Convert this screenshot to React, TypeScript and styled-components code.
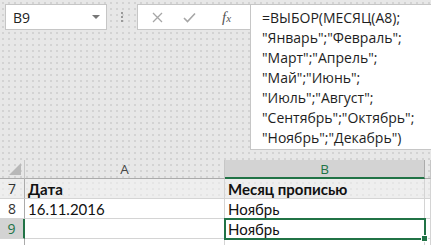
import styled, { createGlobalStyle } from 'styled-components'

const GlobalStyle = createGlobalStyle`
    html, body {
        margin: 0;
        padding: 0;
        width: 431px;
        height: 245px;
        overflow: hidden;
        background-color: #e7e7e7;
        background-image: radial-gradient(#d2d2d2 0.7px, transparent 0.8px);
        background-size: 6px 6px;
    }
`

const Page = styled.div`
    width: 431px;
    height: 245px;
    overflow: hidden;
    display: flex;
    flex-direction: column;
`

// Formula bar
const Bar = styled.div`
    height: 160px;
    flex-shrink: 0;
    display: flex;
    align-items: flex-start;
    padding: 4px 0 0 5px;
    box-sizing: border-box;
`

const NameBox = styled.div`
    width: 102px;
    height: 26px;
    box-sizing: border-box;
    background: #fff;
    border: 1px solid #c6c6c6;
    display: flex;
    align-items: center;
    justify-content: space-between;
    padding: 0 6px 0 7px;
    font-family: "Open Sans", sans-serif;
    font-size: 14px;
    color: #222;
`

const Caret = styled.span`
    width: 0;
    height: 0;
    border-left: 4px solid transparent;
    border-right: 4px solid transparent;
    border-top: 4px solid #777;
`

const Grip = styled.div`
    width: 30px;
    height: 26px;
    display: flex;
    flex-direction: column;
    align-items: center;
    justify-content: center;
    gap: 2px;

    & > span {
        width: 2px;
        height: 2px;
        background: #9a9a9a;
    }
`

const Buttons = styled.div`
    width: 113px;
    height: 26px;
    box-sizing: border-box;
    background: #fff;
    border: 1px solid #c6c6c6;
    border-right: 0;
    display: flex;
    align-items: center;
    padding-left: 14px;
    gap: 20px;
`

const Fx = styled.span`
    font-family: "Liberation Serif", serif;
    font-style: italic;
    font-size: 15px;
    color: #555;
    margin-left: 6px;

    & > small {
        font-size: 11px;
    }
`

const FormulaBox = styled.div`
    flex: 1;
    height: 146px;
    box-sizing: border-box;
    background: #fff;
    border: 1px solid #c6c6c6;
    border-right: 0;
    padding: 3px 0 0 11px;
    font-family: "Open Sans", sans-serif;
    font-size: 14px;
    line-height: 20px;
    color: #1e1e1e;
    white-space: pre;
`

// Sheet
const Grid = styled.div`
    display: grid;
    grid-template-columns: 25px 200px 200px 1fr;
    grid-template-rows: 19px 20px 20px 20px 20px;
    font-family: Lato, "Liberation Sans", sans-serif;
    font-size: 15px;
    color: #111;
`

const Corner = styled.div`
    position: relative;
    border-right: 1px solid #c6c6c6;
    border-bottom: 1px solid #ababab;

    &::after {
        content: "";
        position: absolute;
        right: 3px;
        bottom: 3px;
        width: 0;
        height: 0;
        border-left: 12px solid transparent;
        border-bottom: 12px solid #b8b8b8;
    }
`

const ColHead = styled.div<{ $active?: boolean }>`
    display: flex;
    align-items: center;
    justify-content: center;
    font-family: "Open Sans", sans-serif;
    font-size: 13.5px;
    color: ${p => (p.$active ? '#217346' : '#444')};
    background: ${p => (p.$active ? '#d3d3d3' : 'transparent')};
    border-right: 1px solid ${p => (p.$active ? '#ababab' : '#c6c6c6')};
    border-bottom: ${p => (p.$active ? '2px solid #217346' : '1px solid #ababab')};
    box-sizing: border-box;
`

const RowHead = styled.div<{ $active?: boolean; $shade?: boolean }>`
    display: flex;
    align-items: center;
    justify-content: center;
    font-family: "Open Sans", sans-serif;
    font-size: 14px;
    color: ${p => (p.$active ? '#217346' : '#333')};
    background: ${p => (p.$active ? '#d3d3d3' : p.$shade ? 'rgba(244,244,244,0.55)' : '#fff')};
    border-right: ${p => (p.$active ? '2px solid #217346' : '1px solid #ababab')};
    border-bottom: 1px solid #d4d4d4;
    box-sizing: border-box;
`

const Cell = styled.div<{ $bold?: boolean; $shade?: boolean; $selected?: boolean }>`
    position: relative;
    display: flex;
    align-items: center;
    padding-left: 3px;
    font-weight: ${p => (p.$bold ? 700 : 400)};
    background: ${p => (p.$shade ? 'rgba(244,244,244,0.55)' : '#fff')};
    border-right: 1px solid #d4d4d4;
    border-bottom: 1px solid #d4d4d4;
    box-sizing: border-box;

    ${p => p.$selected && `
        outline: 2px solid #217346;
        outline-offset: -1px;
        z-index: 1;
        &::after {
            content: "";
            position: absolute;
            right: -4px;
            bottom: -4px;
            width: 5px;
            height: 5px;
            background: #217346;
            border: 1px solid #fff;
        }
    `}
`

const CrossIcon = () => (
    <svg width="11" height="11" viewBox="0 0 11 11">
        <path d="M1 1 L10 10 M10 1 L1 10" stroke="#a6a6a6" strokeWidth="1.3" fill="none" />
    </svg>
)

const CheckIcon = () => (
    <svg width="13" height="11" viewBox="0 0 13 11">
        <path d="M1 6 L4.5 9.5 L12 1.5" stroke="#a6a6a6" strokeWidth="1.6" fill="none" />
    </svg>
)

const formula = `=ВЫБОР(МЕСЯЦ(A8);
"Январь";"Февраль";
"Март";"Апрель";
"Май";"Июнь";
"Июль";"Август";
"Сентябрь";"Октябрь";
"Ноябрь";"Декабрь")`

const App = () => {
    return (
        <Page>
            <GlobalStyle />
            <Bar>
                <NameBox>
                    B9
                    <Caret />
                </NameBox>
                <Grip>
                    <span />
                    <span />
                    <span />
                </Grip>
                <Buttons>
                    <CrossIcon />
                    <CheckIcon />
                    <Fx>
                        f<small>x</small>
                    </Fx>
                </Buttons>
                <FormulaBox>{formula}</FormulaBox>
            </Bar>

            <Grid>
                <Corner />
                <ColHead>A</ColHead>
                <ColHead $active>B</ColHead>
                <ColHead />

                <RowHead $shade>7</RowHead>
                <Cell $bold $shade>Дата</Cell>
                <Cell $bold $shade>Месяц прописью</Cell>
                <Cell $shade />

                <RowHead>8</RowHead>
                <Cell>16.11.2016</Cell>
                <Cell>Ноябрь</Cell>
                <Cell />

                <RowHead $active>9</RowHead>
                <Cell />
                <Cell $selected>Ноябрь</Cell>
                <Cell />

                <RowHead />
                <Cell />
                <Cell />
                <Cell />
            </Grid>
        </Page>
    )
}

export default App
